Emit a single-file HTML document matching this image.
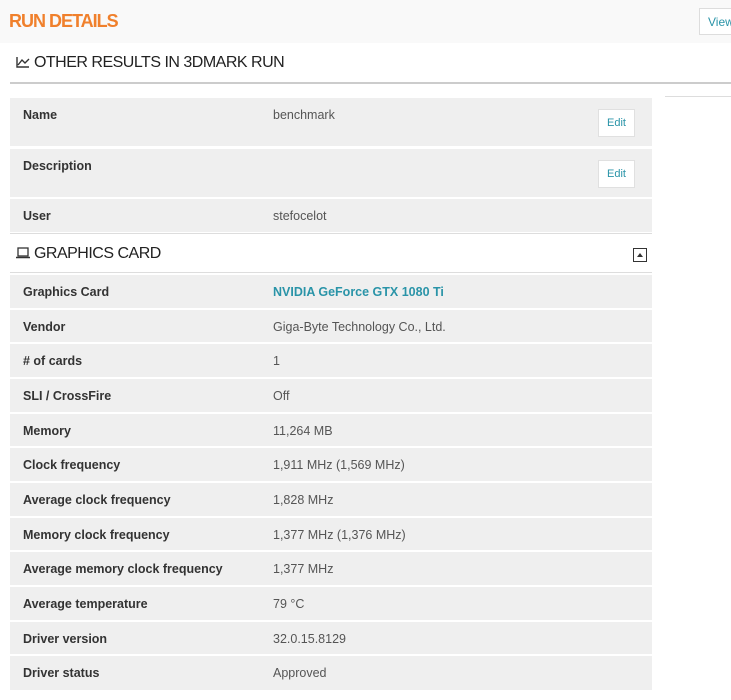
<!DOCTYPE html><html><head><style>
body{margin:0;width:731px;height:700px;overflow:hidden;background:#fff;font-family:"Liberation Sans",sans-serif;position:relative}
.top{position:absolute;left:0;top:0;width:731px;height:43px;background:#f9f9f9}
h1{position:absolute;left:9px;top:11px;margin:0;font-size:18px;color:#f0802c;font-weight:bold;letter-spacing:-1px}
.view{position:absolute;left:699px;top:8px;width:40px;height:27px;border:1px solid #ddd;background:#fff;color:#2a94a8;font-size:12px;line-height:27px;padding-left:8px;box-sizing:border-box}
.h2{position:absolute;left:16px;font-size:16px;color:#222;letter-spacing:-.5px}
.line{position:absolute;height:2px;background:#ccc}
.row{position:absolute;left:10px;width:642px;background:#efefef;font-size:12.5px;color:#444}
.row b{position:absolute;left:13px;top:10px;color:#333}
.row span{position:absolute;left:263px;top:10px;color:#555}
.edit{position:absolute;left:588px;top:12px;width:37px;height:28px;background:#fff;border:1px solid #e0e0e0;box-sizing:border-box;color:#2a94a8;font-size:11px;text-align:center;line-height:26px}
</style></head><body>
<div class="top"></div>
<h1>RUN DETAILS</h1>
<div class="view">View</div>
<div class="h2" style="top:54px"><svg width="14" height="12" style="vertical-align:-1px"><path d="M1 1V11H13M2 9L6 4L9 7L13 3" fill="none" stroke="#333" stroke-width="1.4"/></svg> OTHER RESULTS IN 3DMARK RUN</div>
<div class="line" style="left:10px;top:82px;width:721px"></div>
<div class="line" style="left:665px;top:96px;width:66px;height:1px;background:#ddd"></div>
<div class="row" style="top:98px;height:48px"><b>Name</b><span>benchmark</span><div class="edit" style="top:11px">Edit</div></div>
<div class="row" style="top:149px;height:48px"><b>Description</b><div class="edit" style="top:11px">Edit</div></div>
<div class="row" style="top:199px;height:33px"><b>User</b><span>stefocelot</span></div>
<div class="line" style="left:10px;top:233px;width:642px;height:1px;background:#ddd"></div>
<div class="h2" style="top:245px"><svg width="14" height="12" style="vertical-align:-1px"><rect x="2" y="1" width="10" height="8" fill="none" stroke="#333" stroke-width="1.3"/><path d="M0 10.5H14" stroke="#333" stroke-width="1.5"/></svg> GRAPHICS CARD</div>
<svg style="position:absolute;left:633px;top:248px" width="14" height="14"><rect x="0.5" y="0.5" width="13" height="13" fill="none" stroke="#333"/><path d="M4 9L7 5L10 9Z" fill="#333"/></svg>
<div class="line" style="left:10px;top:272px;width:642px;height:1px;background:#ddd"></div>
<div class="row" style="top:275px;height:33px"><b>Graphics Card</b><span style="color:#2a94a8;font-weight:bold">NVIDIA GeForce GTX 1080 Ti</span></div>
<div class="row" style="top:310px;height:32px"><b>Vendor</b><span>Giga-Byte Technology Co., Ltd.</span></div>
<div class="row" style="top:344px;height:33px"><b># of cards</b><span>1</span></div>
<div class="row" style="top:379px;height:33px"><b>SLI / CrossFire</b><span>Off</span></div>
<div class="row" style="top:414px;height:32px"><b>Memory</b><span>11,264 MB</span></div>
<div class="row" style="top:448px;height:33px"><b>Clock frequency</b><span>1,911 MHz (1,569 MHz)</span></div>
<div class="row" style="top:483px;height:33px"><b>Average clock frequency</b><span>1,828 MHz</span></div>
<div class="row" style="top:518px;height:32px"><b>Memory clock frequency</b><span>1,377 MHz (1,376 MHz)</span></div>
<div class="row" style="top:552px;height:33px"><b>Average memory clock frequency</b><span>1,377 MHz</span></div>
<div class="row" style="top:587px;height:33px"><b>Average temperature</b><span>79 °C</span></div>
<div class="row" style="top:622px;height:32px"><b>Driver version</b><span>32.0.15.8129</span></div>
<div class="row" style="top:656px;height:34px"><b>Driver status</b><span>Approved</span></div>
</body></html>
